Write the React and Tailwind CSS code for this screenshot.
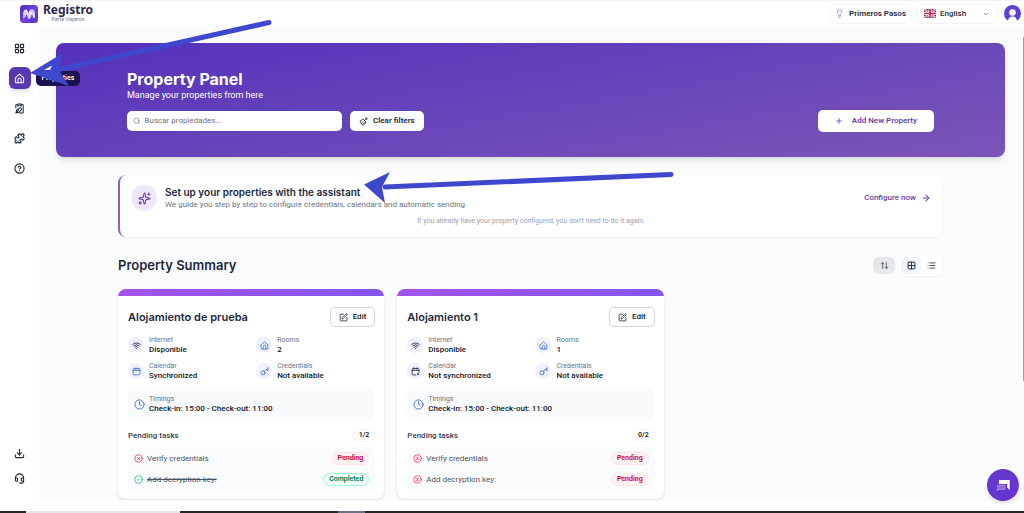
import React from 'react';
import {
  ArrowRight,
  ChevronDown,
  CircleCheck,
  CircleHelp,
  CircleX,
  Clock,
  Download,
  Grid2x2,
  Headset,
  LayoutGrid,
  Lightbulb,
  List,
  Plus,
  Puzzle,
  Search,
  Sparkles,
  SquarePen,
  Wifi,
} from 'lucide-react';

const properties = [
  {
    name: 'Alojamiento de prueba',
    internet: 'Disponible',
    rooms: '2',
    calendar: 'Synchronized',
    synced: true,
    credentials: 'Not available',
    progress: '1/2',
    tasks: [
      { label: 'Verify credentials', done: false },
      { label: 'Add decryption key:', done: true },
    ],
  },
  {
    name: 'Alojamiento 1',
    internet: 'Disponible',
    rooms: '1',
    calendar: 'Not synchronized',
    synced: false,
    credentials: 'Not available',
    progress: '0/2',
    tasks: [
      { label: 'Verify credentials', done: false },
      { label: 'Add decryption key:', done: false },
    ],
  },
];

const Logo = () => (
  <svg viewBox="0 0 36 36" className="size-[18px]" aria-hidden="true">
    <defs>
      <linearGradient id="logoBg" x1="0" y1="0" x2="1" y2="1">
        <stop offset="0" stopColor="#4a2fb5" />
        <stop offset="0.5" stopColor="#6d3fdc" />
        <stop offset="1" stopColor="#5b35c9" />
      </linearGradient>
      <linearGradient id="logoWave" x1="0" y1="1" x2="1" y2="0">
        <stop offset="0" stopColor="#b9a4f6" />
        <stop offset="0.6" stopColor="#f3eeff" />
        <stop offset="1" stopColor="#a98bf2" />
      </linearGradient>
    </defs>
    <rect width="36" height="36" rx="7" fill="url(#logoBg)" />
    <path
      d="M6 27V18c0-5 3-9 6-9 3 0 3 4 5 8 1-5 4-9 7-9 4 0 6 4 6 9v7c0 3-3 3-4 0l-2-7c-2 6-3 11-6 11-3 0-3-5-5-10-1 5-3 9-7 9z"
      fill="url(#logoWave)"
    />
  </svg>
);

const UkFlag = () => (
  <svg viewBox="0 0 36 27" className="h-[9px] w-3 shrink-0" aria-hidden="true">
    <rect width="36" height="27" fill="#27408b" />
    <path d="M0 0l36 27M36 0L0 27" stroke="#fff" strokeWidth="6" />
    <path d="M0 0l36 27M36 0L0 27" stroke="#cf2442" strokeWidth="2.5" />
    <path d="M18 0v27M0 13.5h36" stroke="#fff" strokeWidth="9" />
    <path d="M18 0v27M0 13.5h36" stroke="#cf2442" strokeWidth="5" />
  </svg>
);

const LineIcon = ({ className, children }) => (
  <svg viewBox="0 0 24 24" className={className} fill="none" stroke="currentColor" strokeWidth="2.2" strokeLinecap="round" strokeLinejoin="round" aria-hidden="true">
    {children}
  </svg>
);

// House with an arched door
const HomeIcon = ({ className }) => (
  <LineIcon className={className}>
    <path d="M3 10.5L12 2.5l9 8V19a2.500 2.500 0 0 1-2.500 2.500h-13A2.500 2.500 0 0 1 3 19z" />
    <path d="M8.500 21v-6a3.500 3.500 0 0 1 7 0v6" />
  </LineIcon>
);

// Clipboard with a signing pen
const ClipboardSign = ({ className }) => (
  <LineIcon className={className}>
    <path d="M8 2h8v4H8z" />
    <path d="M16 4h4v18h-8" />
    <path d="M4 11V4h4" />
    <path d="M14 10c2 1 3 2 3 4l-6 6-7 2 2-7z M4 22l6-7" />
  </LineIcon>
);

const BrushIcon = ({ className }) => (
  <LineIcon className={className}>
    <path d="M15 9l6-6M17 3h4v4" />
    <path d="M10 6c-2 2-4 3-7 4 0 6 4 11 9 11 3-2 5-4 6-7z" />
    <path d="M7 16l4-4M11 19l3-4" />
  </LineIcon>
);

const CalendarIcon = ({ className, synced }) => (
  <LineIcon className={className}>
    <path d="M8 2v4M16 2v4M3 9h18M21 14V6a2 2 0 0 0-2-2H5a2 2 0 0 0-2 2v13a2 2 0 0 0 2 2h8" />
    <path d={synced ? 'M16 20l2 2 4-5' : 'M17 17l4 4M21 17l-4 4'} />
  </LineIcon>
);

const KeyIcon = ({ className }) => (
  <LineIcon className={className}>
    <circle cx="8" cy="15.5" r="5.5" />
    <path d="M12 11.5L21 2.5M17 6.5l4 3.500M21 2.5v7" />
  </LineIcon>
);

const SortIcon = ({ className }) => (
  <LineIcon className={className}>
    <path d="M7 20V4M3 8l4-4 4 4M17 4v16M13 16l4 4 4-4" />
  </LineIcon>
);

const Header = () => (
  <header className="flex h-[26px] shrink-0 items-center justify-between border-t border-gray-100 bg-white pl-5 pr-[3px]">
    <a href="#home" className="flex items-center gap-[5px]">
      <Logo />
      <span className="flex flex-col items-center pb-[2px]">
        <span className="font-['Noto_Sans',sans-serif] text-[12px] leading-[13px] font-bold text-[#2b2750]">Registro</span>
        <span className="font-['Inter',sans-serif] text-[5px] leading-[6px] text-gray-500">Parte Viajeros</span>
      </span>
    </a>
    <div className="flex items-center gap-[6px]">
      <button type="button" className="flex h-5 items-center gap-[5px] rounded-md border border-gray-100 px-[4px] text-[8px] font-semibold text-gray-800">
        <Lightbulb className="size-[9px] text-[#a06cb8]" />
        Primeros Pasos
      </button>
      <div className="relative flex h-5 w-[81px] items-center rounded-md border border-gray-100 pl-[6px]">
        <UkFlag />
        <select aria-label="Language" className="h-full w-full appearance-none bg-transparent pl-1 text-[8px] font-medium text-gray-800" defaultValue="en">
          <option value="en">English</option>
          <option value="es">Español</option>
        </select>
        <ChevronDown className="pointer-events-none absolute right-[7px] size-2 text-gray-500" />
      </div>
      <button type="button" aria-label="Account" className="size-[17px]">
        <svg viewBox="0 0 34 34" className="size-full" aria-hidden="true">
          <circle cx="17" cy="17" r="17" fill="#5b3fd6" />
          <circle cx="17" cy="15" r="6.5" fill="#fff" />
          <path d="M8 34c0-8 4-11 9-11s9 3 9 11z" fill="#fff" />
        </svg>
      </button>
    </div>
  </header>
);

const NavButton = ({ label, active, children }) => (
  <button
    type="button"
    aria-label={label}
    className={
      active
        ? 'flex size-[22px] items-center justify-center rounded-md bg-[#5638b0] text-white shadow-md'
        : 'flex size-[22px] items-center justify-center rounded-md text-gray-800'
    }
  >
    {children}
  </button>
);

const Sidebar = () => (
  <nav className="flex w-[39px] shrink-0 flex-col items-center justify-between bg-white py-[11px]">
    <div className="flex flex-col gap-2">
      <NavButton label="Dashboard"><LayoutGrid className="size-[11px]" strokeWidth={2.4} /></NavButton>
      <div className="relative">
        <NavButton label="Home" active><HomeIcon className="size-[11px]" /></NavButton>
        <span role="tooltip" className="absolute top-1 left-[27px] z-10 rounded-[5px] bg-[#1c1251] px-[6px] text-[7px] leading-[15px] font-semibold text-white">
          Properties
        </span>
      </div>
      <NavButton label="Records"><ClipboardSign className="size-[11px]" /></NavButton>
      <NavButton label="Integrations"><Puzzle className="size-[11px]" strokeWidth={2.4} /></NavButton>
      <NavButton label="Help"><CircleHelp className="size-[11px]" strokeWidth={2.4} /></NavButton>
    </div>
    <div className="flex flex-col gap-[3px]">
      <NavButton label="Download"><Download className="size-[11px]" strokeWidth={2.4} /></NavButton>
      <NavButton label="Support"><Headset className="size-[11px]" strokeWidth={2.4} /></NavButton>
    </div>
  </nav>
);

const Banner = () => (
  <section className="rounded-lg bg-linear-170 from-[#5530bb] to-[#7b55b7] px-[71px] pt-[26px] pb-[25px] shadow-md">
    <h1 className="font-['Inter',sans-serif] text-[16px] leading-5 font-bold text-white">Property Panel</h1>
    <p className="text-[9px] leading-[13px] text-white">Manage your properties from here</p>
    <div className="mt-2 flex items-center gap-2">
      <label className="flex h-5 w-[215px] items-center gap-1 rounded-[5px] bg-white px-[6px]">
        <Search className="size-2 text-gray-500" />
        <input
          type="text"
          aria-label="Buscar propiedades"
          placeholder="Buscar propiedades..."
          className="w-full bg-transparent text-[8px] text-gray-800 outline-none placeholder:text-gray-500"
        />
      </label>
      <button type="button" className="flex h-5 items-center gap-[5px] rounded-[5px] bg-white px-[9px] text-[8px] font-semibold text-gray-800">
        <BrushIcon className="size-[9px]" />
        Clear filters
      </button>
      <button type="button" className="ml-auto flex h-[22px] items-center gap-[9px] rounded-[5px] bg-white px-[17px] text-[8px] font-semibold text-[#6b3fa0]">
        <Plus className="size-2" strokeWidth={2.5} />
        Add New Property
      </button>
    </div>
  </section>
);

const AssistantCard = () => (
  <section className="mt-[18px] rounded-lg border-l-2 border-[#8a63c4] bg-white pt-[10px] pr-3 pb-[10px] pl-[11px] shadow-xs">
    <div className="flex items-center gap-2">
      <span className="flex size-[26px] items-center justify-center rounded-full bg-[#efe8fa] text-[#6d3cb8]">
        <Sparkles className="size-[13px]" />
      </span>
      <div>
        <h2 className="font-['Inter',sans-serif] text-[10px] leading-[14px] font-semibold text-gray-800">Set up your properties with the assistant</h2>
        <p className="text-[8px] leading-3 text-gray-500">We guide you step by step to configure credentials, calendars and automatic sending</p>
      </div>
      <a href="#configure" className="ml-auto flex items-center gap-[5px] text-[8px] font-medium text-[#6b3fa0]">
        Configure now
        <ArrowRight className="size-[10px]" strokeWidth={2.5} />
      </a>
    </div>
    <p className="mt-[5px] text-center text-[7px] leading-[11px] text-gray-400">
      If you already have your property configured, you don't need to do it again.
    </p>
  </section>
);

const Detail = ({ icon, label, value, dark }) => (
  <div className="flex items-center gap-[5px]">
    <span
      className={
        dark
          ? 'flex size-4 items-center justify-center rounded-full bg-[#f0effc] text-[#2b2a52]'
          : 'flex size-4 items-center justify-center rounded-full bg-[#edf2fd] text-[#3f6fc4]'
      }
    >
      {icon}
    </span>
    <div>
      <p className="text-[7px] leading-[10px] text-gray-500">{label}</p>
      <p className="text-[8px] leading-[10px] font-medium text-gray-900">{value}</p>
    </div>
  </div>
);

const Task = ({ label, done }) => (
  <li className="flex items-center justify-between">
    <span className="flex items-center gap-1 text-[8px] leading-3 text-gray-600">
      {done ? <CircleCheck className="size-[9px] text-emerald-500" /> : <CircleX className="size-[9px] text-rose-500" />}
      <span className={done ? 'line-through' : ''}>{label}</span>
    </span>
    <span
      className={
        done
          ? 'rounded-full border border-emerald-200 bg-emerald-50 px-[5px] text-[7px] leading-[11px] font-semibold text-emerald-700'
          : 'rounded-full border border-rose-100 bg-rose-50 px-[5px] text-[7px] leading-[11px] font-semibold text-rose-700'
      }
    >
      {done ? 'Completed' : 'Pending'}
    </span>
  </li>
);

const PropertyCard = ({ property }) => (
  <article className="overflow-hidden rounded-lg bg-white shadow-sm">
    <div className="h-[7px] bg-linear-to-r from-[#a452ea] to-[#8455ee]" />
    <div className="pt-[11px] pr-[9px] pb-2 pl-[10px]">
      <div className="flex items-center justify-between">
        <h3 className="font-['Inter',sans-serif] text-[11px] font-semibold text-gray-800">{property.name}</h3>
        <button type="button" className="flex h-5 items-center gap-[5px] rounded-[5px] border border-gray-300 px-2 text-[8px] font-medium text-gray-900">
          <SquarePen className="size-[9px]" />
          Edit
        </button>
      </div>
      <div className="mt-2 grid grid-cols-2 gap-x-[9px] gap-y-[6px]">
        <Detail dark icon={<Wifi className="size-[9px]" strokeWidth={2.5} />} label="Internet" value={property.internet} />
        <Detail icon={<HomeIcon className="size-[9px]" />} label="Rooms" value={property.rooms} />
        <Detail
          dark={!property.synced}
          icon={<CalendarIcon className="size-[9px]" synced={property.synced} />}
          label="Calendar"
          value={property.calendar}
        />
        <Detail icon={<KeyIcon className="size-[9px]" />} label="Credentials" value={property.credentials} />
      </div>
      <div className="mt-2 flex items-center gap-1 rounded-md bg-[#f9fafb] px-[6px] py-[5px]">
        <Clock className="size-[11px] text-[#3f6fc4]" />
        <div>
          <p className="text-[7px] leading-[10px] text-gray-500">Timings</p>
          <p className="text-[8px] leading-[10px] font-medium text-gray-900">Check-in: 15:00 - Check-out: 11:00</p>
        </div>
      </div>
      <div className="mt-[10px] flex items-center justify-between">
        <h4 className="text-[8px] font-medium text-gray-700">Pending tasks</h4>
        <span className="rounded-full border border-gray-100 px-[5px] text-[7px] leading-[11px] font-semibold text-gray-900">{property.progress}</span>
      </div>
      <ul className="mt-[5px] flex flex-col gap-2 rounded-md bg-[#fafbfc] px-[6px] py-[5px]">
        {property.tasks.map((task) => (
          <Task key={task.label} label={task.label} done={task.done} />
        ))}
      </ul>
    </div>
  </article>
);

const PropertySummary = () => (
  <section className="mt-[18px]">
    <div className="flex items-center justify-between">
      <h2 className="font-['Inter',sans-serif] text-[13px] font-semibold text-gray-800">Property Summary</h2>
      <div className="flex items-center gap-1">
        <button type="button" aria-label="Sort" className="flex h-[17px] w-[22px] items-center justify-center rounded-md bg-gray-200 text-gray-600">
          <SortIcon className="size-[9px]" />
        </button>
        <div className="flex rounded-md bg-white p-[2px] shadow-xs">
          <button type="button" aria-label="Grid view" className="flex h-[17px] w-5 items-center justify-center rounded-[5px] bg-slate-100 text-gray-800">
            <Grid2x2 className="size-[9px]" strokeWidth={2.5} />
          </button>
          <button type="button" aria-label="List view" className="flex h-[17px] w-5 items-center justify-center rounded-[5px] text-gray-700">
            <List className="size-[9px]" strokeWidth={2.5} />
          </button>
        </div>
      </div>
    </div>
    <div className="mt-[13px] grid grid-cols-3 gap-[13px]">
      {properties.map((property) => (
        <PropertyCard key={property.name} property={property} />
      ))}
    </div>
  </section>
);

// Hand-drawn pointers laid over the page
const Pointers = () => (
  <svg width="1024" height="513" viewBox="0 0 1024 513" className="pointer-events-none absolute top-0 left-0 z-20" aria-hidden="true">
    <g fill="#3f48cc" stroke="#3f48cc">
      <path d="M269 22.5L52 71" strokeWidth="5" strokeLinecap="round" />
      <path d="M30 73L63 53L59 70L69 86Z" stroke="none" />
      <path d="M44 70L52 65.5L50 70Z" fill="#fff" stroke="none" />
      <path d="M671 174.5L385 187" strokeWidth="5" strokeLinecap="round" />
      <path d="M364 184.5L390 172L382 187L385 203Z" stroke="none" />
    </g>
  </svg>
);

const App = () => {
  return (
    <div className="relative flex h-screen flex-col overflow-hidden bg-white font-['Roboto',sans-serif]">
      <Header />
      <div className="flex min-h-0 flex-1">
        <Sidebar />
        <main className="min-w-0 flex-1 overflow-hidden bg-[#f9fbfd] pt-[17px] pr-[19px] pl-[17px]">
          <Banner />
          <div className="px-[62px]">
            <AssistantCard />
            <PropertySummary />
          </div>
        </main>
      </div>
      <footer className="shrink-0 bg-white pt-[11px]">
        <div className="flex h-[2px] bg-[#2a2628]">
          <div className="ml-[26px] w-[154px] bg-gray-200" />
          <div className="ml-[158px] w-[27px] bg-gray-500" />
        </div>
      </footer>
      <div className="absolute top-[37px] right-0 h-[344px] w-px bg-gray-400" />
      <button
        type="button"
        aria-label="Open chat"
        className="absolute right-[5px] bottom-3 flex size-8 items-center justify-center rounded-full bg-[#6537cf] shadow-md"
      >
        <svg viewBox="0 0 42 36" className="h-3 w-[14px]" aria-hidden="true">
          <path d="M9 3h32v30l-8-8V15H9z" fill="#fff" />
          <path d="M5 19h22v12H9l-7 4 3-6z" fill="#8c68e0" stroke="#c3b0f2" strokeWidth="2" />
        </svg>
      </button>
      <Pointers />
    </div>
  );
};

export default App;
